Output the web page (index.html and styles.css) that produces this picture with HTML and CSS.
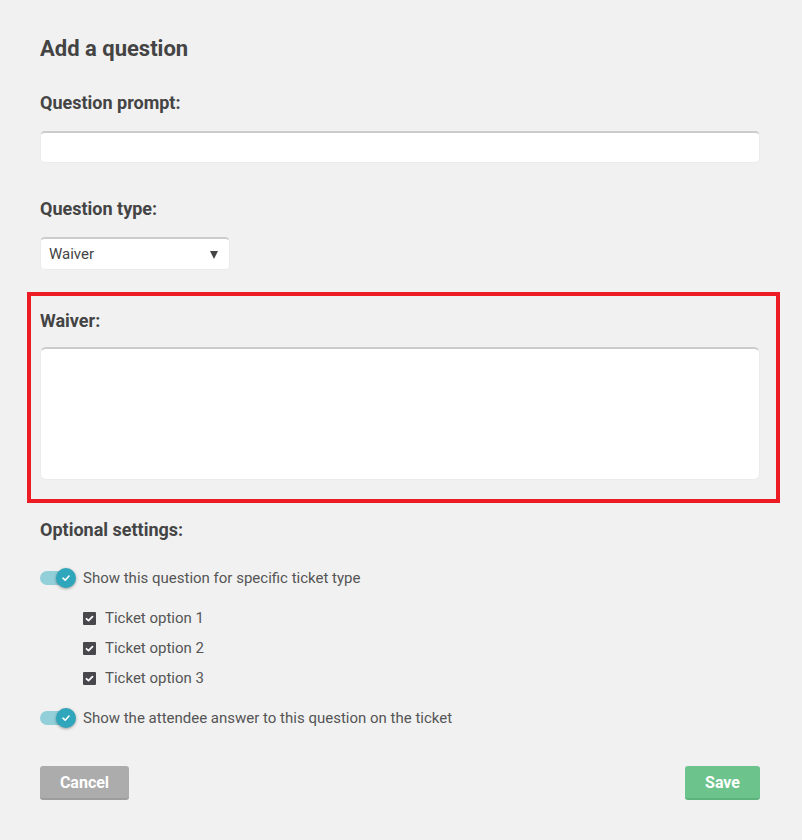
FILE: index.html
```html
<!DOCTYPE html>
<html>
<head>
<meta charset="utf-8">
<link rel="stylesheet" href="styles.css">
</head>
<body>
<div class="page">
  <h1 class="title">Add a question</h1>

  <div class="label label-first">Question prompt:</div>
  <div class="input"></div>

  <div class="label label-next">Question type:</div>
  <div class="select">
    <span>Waiver</span>
    <span class="arrow"></span>
  </div>

  <div class="highlight">
    <div class="label">Waiver:</div>
    <div class="textarea"></div>
  </div>

  <div class="label label-opt">Optional settings:</div>

  <div class="toggle-row row-first">
    <span class="toggle"><span class="track"></span><span class="knob"><svg width="10" height="10" viewBox="0 0 10 10"><path d="M2 5.2 L4.2 7.2 L8 3" fill="none" stroke="#fff" stroke-width="1.6" stroke-linecap="round" stroke-linejoin="round"/></svg></span></span>
    <span class="text">Show this question for specific ticket type</span>
  </div>

  <div class="checks">
    <div class="check-row">
      <span class="box"><svg width="13" height="13" viewBox="0 0 13 13"><path d="M3.5 6.8 L5.5 8.6 L9.5 4.6" fill="none" stroke="#fff" stroke-width="1.8" stroke-linecap="round" stroke-linejoin="round"/></svg></span>
      <span class="text">Ticket option 1</span>
    </div>
    <div class="check-row">
      <span class="box"><svg width="13" height="13" viewBox="0 0 13 13"><path d="M3.5 6.8 L5.5 8.6 L9.5 4.6" fill="none" stroke="#fff" stroke-width="1.8" stroke-linecap="round" stroke-linejoin="round"/></svg></span>
      <span class="text">Ticket option 2</span>
    </div>
    <div class="check-row">
      <span class="box"><svg width="13" height="13" viewBox="0 0 13 13"><path d="M3.5 6.8 L5.5 8.6 L9.5 4.6" fill="none" stroke="#fff" stroke-width="1.8" stroke-linecap="round" stroke-linejoin="round"/></svg></span>
      <span class="text">Ticket option 3</span>
    </div>
  </div>

  <div class="toggle-row row-second">
    <span class="toggle"><span class="track"></span><span class="knob"><svg width="10" height="10" viewBox="0 0 10 10"><path d="M2 5.2 L4.2 7.2 L8 3" fill="none" stroke="#fff" stroke-width="1.6" stroke-linecap="round" stroke-linejoin="round"/></svg></span></span>
    <span class="text">Show the attendee answer to this question on the ticket</span>
  </div>

  <div class="buttons">
    <button class="btn btn-cancel">Cancel</button>
    <button class="btn btn-save">Save</button>
  </div>
</div>
</body>
</html>
```

FILE: styles.css
```css
html, body {
  margin: 0;
  padding: 0;
  background: #f1f1f1;
}
body {
  font-family: Roboto, "Liberation Sans", Arial, sans-serif;
  color: #444;
}
.page {
  width: 720px;
  padding: 36px 42px 40px 40px;
}
.title {
  margin: 0;
  font-size: 22px;
  line-height: 26px;
  font-weight: 700;
  color: #444;
}
.label {
  font-size: 18px;
  line-height: 22px;
  font-weight: 700;
  color: #444;
}
.label-first { margin-top: 30px; }
.label-next { margin-top: 35px; }
.label-opt { margin-top: 16px; }
.input {
  margin-top: 17px;
  height: 29px;
  background: #fff;
  border: 1px solid #ebebeb;
  border-top: 2px solid #cccccc;
  border-radius: 5px;
}
.select {
  margin-top: 17px;
  width: 190px;
  height: 33px;
  box-sizing: border-box;
  background: #fff;
  border: 1px solid #ebebeb;
  border-top: 2px solid #cccccc;
  border-radius: 5px;
  display: flex;
  align-items: center;
  justify-content: space-between;
  padding: 0 11px 0 8px;
  font-size: 15px;
  color: #444;
}
.arrow {
  width: 0;
  height: 0;
  border-left: 4px solid transparent;
  border-right: 4px solid transparent;
  border-top: 8px solid #444;
  margin-top: 1px;
}
.highlight {
  margin: 22px -20px 0 -13px;
  padding: 14px 16px 19px 9px;
  border: 4px solid #ed1c24;
}
.textarea {
  margin-top: 15px;
  height: 130px;
  background: #fff;
  border: 1px solid #ebebeb;
  border-top: 2px solid #cccccc;
  border-radius: 6px;
}
.toggle-row {
  display: flex;
  align-items: center;
  height: 20px;
}
.row-first { margin-top: 27px; }
.row-second { margin-top: 20px; }
.toggle {
  position: relative;
  width: 36px;
  height: 20px;
  margin-right: 7px;
  flex: none;
}
.track {
  position: absolute;
  left: 0;
  top: 3px;
  width: 30px;
  height: 14px;
  border-radius: 7px;
  background: #92cfd8;
}
.knob {
  position: absolute;
  left: 16px;
  top: 0;
  width: 20px;
  height: 20px;
  border-radius: 50%;
  background: #2fa6bb;
  box-shadow: 0 1px 3px rgba(0,0,0,0.35);
  display: flex;
  align-items: center;
  justify-content: center;
}
.text {
  font-size: 15px;
  color: #555;
  line-height: 20px;
}
.checks {
  margin-top: 20px;
  padding-left: 43px;
  display: flex;
  flex-direction: column;
  gap: 10px;
}
.check-row {
  display: flex;
  align-items: center;
  height: 20px;
}
.box {
  width: 13px;
  height: 13px;
  background: #47474c;
  border-radius: 1px;
  margin-right: 9px;
  display: flex;
}
.buttons {
  margin-top: 38px;
  display: flex;
  justify-content: space-between;
}
.btn {
  height: 34px;
  border: none;
  border-radius: 3px;
  color: #fff;
  font-family: Roboto, "Liberation Sans", Arial, sans-serif;
  font-size: 16px;
  font-weight: 700;
  padding: 1px 0 0;
  cursor: pointer;
}
.btn-cancel {
  width: 89px;
  background: #acacac;
  border-bottom: 2px solid #9d9d9d;
}
.btn-save {
  width: 75px;
  background: #6cc38c;
  border-bottom: 2px solid #5cb47c;
}
```
